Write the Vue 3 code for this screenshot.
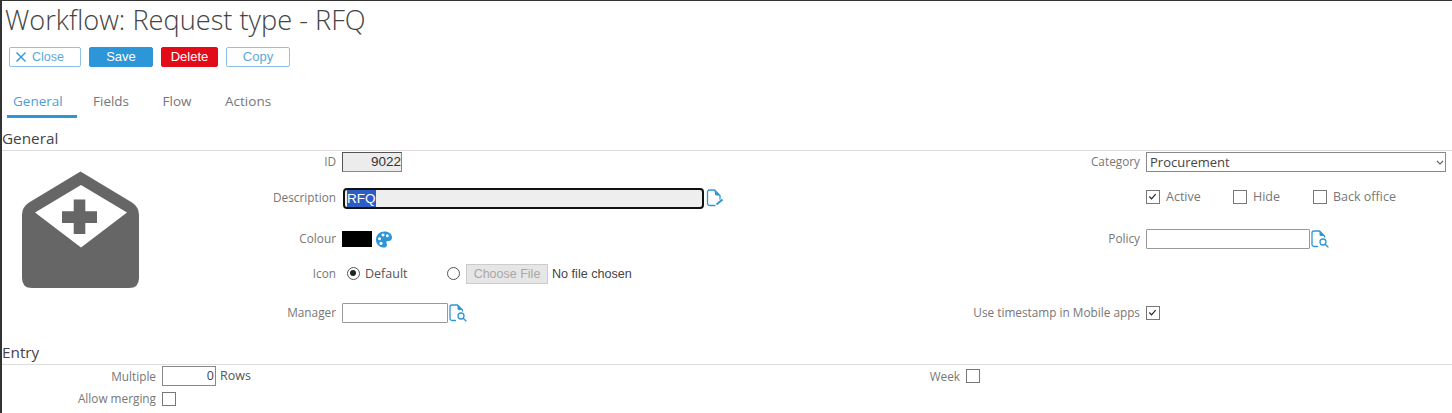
<script setup>
const tabs = ['General', 'Fields', 'Flow', 'Actions']
</script>

<template>
  <div class="page">
    <h1 class="title">Workflow: Request type - RFQ</h1>

    <div class="toolbar">
      <button class="btn outline close">
        <svg class="x" viewBox="0 0 12 12"><path d="M1.500 1.500l9 9M10.500 1.500l-9 9" /></svg>
        Close
      </button>
      <button class="btn save">Save</button>
      <button class="btn delete">Delete</button>
      <button class="btn outline copy">Copy</button>
    </div>

    <nav class="tabs">
      <span v-for="(t, i) in tabs" :key="t" class="tab" :class="{ active: i === 0 }">{{ t }}</span>
    </nav>

    <h2 class="section first">General</h2>
    <div class="general">
      <div class="big-icon">
        <svg viewBox="22 171 118 118" width="118" height="118">
          <path fill-rule="evenodd" fill="#666" d="M80.500 171.500L29 202.500Q22 207 22 215V278Q22 288 32 288H129Q139 288 139 278V215Q139 207 132 202.500ZM35 212.500L81 185L127 212.500L81 247.500ZM73.700 199.500H85.300V211.300H97V223H85.300V234H73.700V223H62V211.300H73.700Z" />
        </svg>
      </div>

      <label class="lbl r1">ID</label>
      <div class="ctl r1"><div class="readonly">9022</div></div>
      <label class="lbl2 r1">Category</label>
      <div class="ctl2 r1">
        <div class="select-wrap">
          <select class="select"><option>Procurement</option></select>
          <svg class="chev" viewBox="0 0 8 5" width="8" height="5"><path d="M1 1l3 3 3-3" /></svg>
        </div>
      </div>

      <label class="lbl r2">Description</label>
      <div class="ctl r2 desc-row">
        <div class="desc"><span class="sel">RFQ</span></div>
        <svg class="doc" viewBox="0 0 18 18" width="18" height="18">
          <path class="doc-line" d="M9 16.500H3.500A2 2 0 0 1 1.500 14.500V3A2 2 0 0 1 3.500 1H8.500L14 6.500V10" />
          <path class="doc-fill" d="M8.500 1L14 6.500H10.500Q9 6.500 9 5Z" />
          <path class="doc-pen" d="M10.500 15.500L16.500 10.500" />
        </svg>
      </div>
      <div class="ctl2 r2 checks">
        <span class="check-item first-c"><span class="cb on"><svg viewBox="0 0 14 14"><path d="M3 7l2.800 3L11 4" /></svg></span>Active</span>
        <span class="check-item hide-c"><span class="cb"></span>Hide</span>
        <span class="check-item"><span class="cb"></span>Back office</span>
      </div>

      <label class="lbl r3">Colour</label>
      <div class="ctl r3 colour-row">
        <span class="swatch"></span>
        <svg class="palette" viewBox="0 0 16 17" width="16" height="17">
          <path fill="#2d96d8" fill-rule="evenodd" d="M8.500 0.500C12.800 0.500 16 3 16 6.500C16 9.500 13.500 10 11.800 10C10.400 10 10 11 10.500 12C11.100 13.200 11.200 14.300 10.600 15.300C10 16.300 8.800 16.800 7.300 16.600C3 16 0 12.800 0 8.700C0 4 3.800 0.500 8.500 0.500ZM3.500 6.200a1.500 1.500 0 1 0 0.010 0ZM7 2.600a1.500 1.500 0 1 0 0.010 0ZM11.300 3.200a1.500 1.500 0 1 0 0.010 0ZM5 10.800a1.600 1.600 0 1 0 0.010 0Z" />
        </svg>
      </div>
      <label class="lbl2 r3">Policy</label>
      <div class="ctl2 r3 lookup">
        <input class="text policy" type="text" />
        <svg class="doc" viewBox="0 0 18 18" width="18" height="18">
          <path class="doc-line" d="M6.500 16.500H3A2 2 0 0 1 1 14.500V3A2 2 0 0 1 3 1H8.500L13.500 6V7" />
          <path class="doc-fill" d="M8.500 1L13.500 6H10Q8.500 6 8.500 4.500Z" />
          <circle class="doc-line" cx="12" cy="12" r="3" />
          <path class="doc-line" d="M14.200 14.200L17 17" />
        </svg>
      </div>

      <label class="lbl r4">Icon</label>
      <div class="ctl r4 icon-row">
        <span class="radio on"></span>
        <span class="opt">Default</span>
        <span class="radio"></span>
        <span class="file-btn">Choose File</span>
        <span class="file-text">No file chosen</span>
      </div>

      <label class="lbl r5">Manager</label>
      <div class="ctl r5 lookup">
        <input class="text manager" type="text" />
        <svg class="doc" viewBox="0 0 18 18" width="18" height="18">
          <path class="doc-line" d="M6.500 16.500H3A2 2 0 0 1 1 14.500V3A2 2 0 0 1 3 1H8.500L13.500 6V7" />
          <path class="doc-fill" d="M8.500 1L13.500 6H10Q8.500 6 8.500 4.500Z" />
          <circle class="doc-line" cx="12" cy="12" r="3" />
          <path class="doc-line" d="M14.200 14.200L17 17" />
        </svg>
      </div>
      <label class="lbl2 r5">Use timestamp in Mobile apps</label>
      <div class="ctl2 r5"><span class="cb on"><svg viewBox="0 0 14 14"><path d="M3 7l2.800 3L11 4" /></svg></span></div>
    </div>

    <h2 class="section entry-head">Entry</h2>
    <div class="entry">
      <label class="elbl top">Multiple</label>
      <div class="ectl">
        <div class="rows-input">0</div>
        <span class="rows-text">Rows</span>
      </div>
      <label class="elbl top">Week</label>
      <div class="ectl"><span class="cb"></span></div>
      <label class="elbl">Allow merging</label>
      <div class="ectl"><span class="cb"></span></div>
    </div>
  </div>
</template>

<style>
html, body { margin: 0; background: #fff; overflow: hidden; }
</style>

<style scoped>
.page {
  box-sizing: border-box;
  width: 1452px;
  height: 413px;
  overflow: hidden;
  border-left: 2px solid #333;
  border-top: 1px solid #333;
  font-family: "Open Sans", sans-serif;
  color: #777;
  font-size: 11.800px;
}
.title {
  margin: 0 0 0 3px;
  height: 42px;
  line-height: 38px;
  font-size: 27.200px;
  font-weight: 300;
  color: #444;
}
.toolbar { display: flex; gap: 8px; margin-left: 7px; margin-top: 4px; }
.btn {
  box-sizing: border-box;
  height: 20px;
  padding: 0;
  border-radius: 2px;
  border: 1px solid #2d96d8;
  font-family: "Liberation Sans", sans-serif;
  font-size: 13px;
  line-height: 18px;
  display: flex;
  align-items: center;
  justify-content: center;
}
.outline { background: #fff; color: #5ba8dc; border-color: #8cc3e6; }
.close { width: 72px; gap: 5px; justify-content: flex-start; padding-left: 5px; font-size: 12.500px; }
.x { width: 12px; height: 12px; fill: none; stroke: #2d96d8; stroke-width: 1.400; }
.copy { width: 64px; }
.save { width: 64px; background: #2d96d8; color: #fff; font-weight: 400; }
.delete { width: 57px; background: #e30b17; border-color: #e30b17; color: #fff; }

.tabs { display: flex; margin-left: 5px; margin-top: 22px; height: 29px; }
.tab {
  box-sizing: border-box;
  height: 29px;
  margin-right: 33.500px;
  font-size: 13.500px;
  line-height: 24px;
  color: #777;
}
.tab.active { width: 70px; padding-left: 6px; margin-right: 16px; color: #4a9fd8; border-bottom: 3px solid #2d96d8; }

.section {
  margin: 0;
  font-weight: 400;
  font-size: 15.300px;
  color: #444;
  border-bottom: 1px solid #ddd;
}
.first { margin-top: 11px; height: 21px; line-height: 18px; }
.entry-head { height: 29px; line-height: 34px; }

.general {
  display: grid;
  grid-template-columns: 200px 134px 418px 386px 302px;
  grid-template-rows: 22px 49px 34px 35px 44px;
}
.big-icon { grid-column: 1; grid-row: 1 / span 5; padding: 20px 0 0 20px; }
.big-icon svg { display: block; }
.lbl { grid-column: 2; text-align: right; align-self: center; padding-bottom: 2px; }
.ctl { grid-column: 3; padding-left: 6px; display: flex; align-items: center; }
.lbl2 { grid-column: 4; text-align: right; align-self: center; padding-bottom: 2px; }
.ctl2 { grid-column: 5; padding-left: 6px; display: flex; align-items: center; }
.r1 { grid-row: 1; }
.r2 { grid-row: 2; }
.r3 { grid-row: 3; }
.r4 { grid-row: 4; }
.r5 { grid-row: 5; }

.readonly {
  box-sizing: border-box;
  width: 60px;
  height: 20px;
  background: #ececec;
  border: 1px solid #666;
  border-color: #555 #888 #888 #555;
  text-align: right;
  font: 13.500px/18px "Liberation Sans", sans-serif;
  color: #333;
}
.select-wrap { position: relative; width: 300px; height: 20px; }
.select {
  box-sizing: border-box;
  display: block;
  width: 300px;
  height: 20px;
  padding: 0 0 0 3px;
  appearance: none;
  background: #fff;
  border: 1px solid #888;
  border-radius: 0;
  font-family: "Open Sans", sans-serif;
  font-size: 13px;
  color: #444;
}
.chev {
  position: absolute;
  right: 2px;
  top: 8px;
  fill: none;
  stroke: #666;
  stroke-width: 1.200;
}
.desc {
  box-sizing: border-box;
  width: 361px;
  height: 21px;
  margin: 2px 0 0 1px;
  padding-left: 2px;
  background: #eee;
  border: 2px solid #111;
  border-radius: 4px;
  font: 13.500px/17px "Liberation Sans", sans-serif;
  color: #fff;
}
.sel { background: #2a5ec4; display: inline-block; height: 17px; }
.desc-row { gap: 2px; }
.doc { display: block; flex: none; }
.doc-line { fill: none; stroke: #2d96d8; stroke-width: 1.300; stroke-linecap: round; }
.doc-fill { fill: #2d96d8; }
.doc-pen { fill: none; stroke: #2d96d8; stroke-width: 2; }

.checks { font-size: 12.500px; align-items: center; padding-bottom: 2px; }
.check-item { display: flex; align-items: center; gap: 6px; }
.first-c { width: 87px; }
.hide-c { width: 80px; }
.cb {
  box-sizing: border-box;
  display: inline-block;
  flex: none;
  width: 14px;
  height: 14px;
  border: 1.500px solid #777;
  background: #fff;
}
.cb svg { display: block; width: 11px; height: 11px; fill: none; stroke: #222; stroke-width: 1.500; }

.swatch { width: 30px; height: 16px; background: #000; margin-right: 4px; }
.text {
  box-sizing: border-box;
  height: 20px;
  padding: 0;
  border: 1px solid #999;
  border-radius: 1px;
  background: #fff;
}
.policy { width: 164px; }
.manager { width: 106px; }
.lookup { gap: 1px; }

.icon-row { font-size: 12.500px; }
.radio {
  box-sizing: border-box;
  width: 13px;
  height: 13px;
  border: 1.200px solid #555;
  border-radius: 50%;
  margin-left: 5px;
  position: relative;
}
.radio.on::after {
  content: "";
  position: absolute;
  left: 2.400px;
  top: 2.400px;
  width: 6px;
  height: 6px;
  border-radius: 50%;
  background: #222;
}
.opt { margin-left: 5px; width: 48px; margin-right: 29px; color: #555; }
.file-btn {
  box-sizing: border-box;
  width: 82px;
  height: 20px;
  margin-left: 6px;
  background: #e6e6e6;
  border: 1px solid #ccc;
  text-align: center;
  font: 12.500px/18px "Liberation Sans", sans-serif;
  color: #a8a8a8;
}
.file-text { margin-left: 4px; font: 12.600px "Liberation Sans", sans-serif; color: #444; }

.entry {
  display: grid;
  grid-template-columns: 154px 644px 160px 1fr;
  grid-template-rows: 22px 24px;
}
.elbl { text-align: right; align-self: center; padding-bottom: 2px; }
.elbl.top { padding-bottom: 0; }
.ectl { display: flex; align-items: center; padding-left: 6px; }
.rows-input {
  box-sizing: border-box;
  width: 54px;
  height: 20px;
  border: 1px solid #888;
  text-align: right;
  padding-right: 1px;
  font-size: 12.500px;
  line-height: 18px;
  color: #444;
}
.rows-text { margin-left: 4px; padding-bottom: 2px; font-size: 12.500px; color: #555; }
</style>
